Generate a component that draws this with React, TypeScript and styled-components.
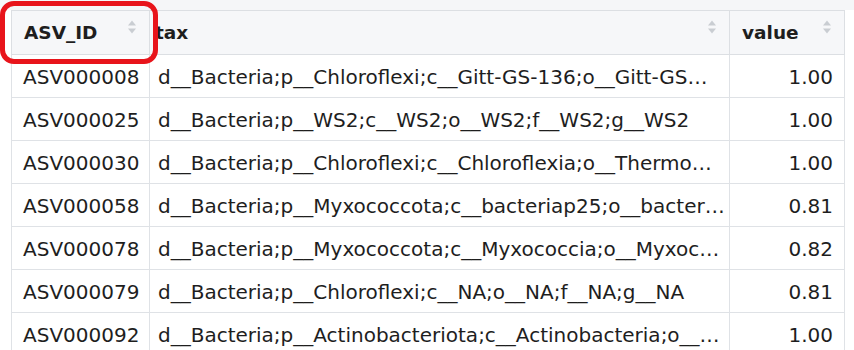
import React from "react";
import styled, { createGlobalStyle } from "styled-components";

const GlobalStyle = createGlobalStyle`
  html, body {
    margin: 0;
    padding: 0;
    background: #ffffff;
    overflow: hidden;
  }
  body {
    font-family: "DejaVu Sans", "Liberation Sans", sans-serif;
    color: #1e1e1e;
  }
`;

type Row = { id: string; tax: string; value: string };

const rows: Row[] = [
  { id: "ASV000008", tax: "d__Bacteria;p__Chloroflexi;c__Gitt-GS-136;o__Gitt-GS…", value: "1.00" },
  { id: "ASV000025", tax: "d__Bacteria;p__WS2;c__WS2;o__WS2;f__WS2;g__WS2", value: "1.00" },
  { id: "ASV000030", tax: "d__Bacteria;p__Chloroflexi;c__Chloroflexia;o__Thermo…", value: "1.00" },
  { id: "ASV000058", tax: "d__Bacteria;p__Myxococcota;c__bacteriap25;o__bacter…", value: "0.81" },
  { id: "ASV000078", tax: "d__Bacteria;p__Myxococcota;c__Myxococcia;o__Myxoc…", value: "0.82" },
  { id: "ASV000079", tax: "d__Bacteria;p__Chloroflexi;c__NA;o__NA;f__NA;g__NA", value: "0.81" },
  { id: "ASV000092", tax: "d__Bacteria;p__Actinobacteriota;c__Actinobacteria;o__…", value: "1.00" },
];

const Page = styled.div`
  position: relative;
  height: 350px;
  overflow: hidden;
  background: #ffffff;
`;

const TopBand = styled.div`
  height: 10px;
  background: #f5f6f8;
`;

const TableWrap = styled.div`
  padding: 0 9px 0 11px;
`;

const Table = styled.table`
  width: 100%;
  border-collapse: collapse;
  table-layout: fixed;
`;

const HeadCell = styled.th<{ $inset?: number }>`
  position: relative;
  height: 44px;
  padding: 0 24px 0 ${(p) => p.$inset ?? 12}px;
  background: #f6f7f9;
  border: 1px solid #dcdfe3;
  text-align: left;
  font-size: 18.5px;
  font-weight: 700;
  color: #1e1e1e;
  vertical-align: middle;
  white-space: nowrap;
  overflow: hidden;
  box-sizing: border-box;
`;

const Cell = styled.td<{ $align?: "left" | "right"; $inset?: number }>`
  height: 43px;
  padding: 1px 11px 0 ${(p) => p.$inset ?? 11}px;
  border: 1px solid #dfe2e6;
  text-align: ${(p) => p.$align ?? "left"};
  font-size: 20px;
  color: #1e1e1e;
  white-space: nowrap;
  overflow: hidden;
  vertical-align: middle;
  box-sizing: border-box;
`;

const SortIcon = styled.svg`
  position: absolute;
  top: 8px;
  right: 12px;
  width: 10px;
  height: 16px;
`;

const Highlight = styled.div`
  position: absolute;
  left: 0;
  top: 1px;
  width: 158px;
  height: 63px;
  border: 5px solid #e8141b;
  border-radius: 14px;
  box-sizing: border-box;
  pointer-events: none;
`;

const Sorter = () => (
  <SortIcon viewBox="0 0 10 16">
    <polygon points="1,6.5 5,1.5 9,6.5" fill="#c9cdd2" />
    <polygon points="1,9.5 5,14.5 9,9.5" fill="#c9cdd2" />
  </SortIcon>
);

export default function App() {
  return (
    <Page>
      <GlobalStyle />
      <TopBand />
      <TableWrap>
        <Table>
          <colgroup>
            <col style={{ width: 138 }} />
            <col />
            <col style={{ width: 115 }} />
          </colgroup>
          <thead>
            <tr>
              <HeadCell>
                ASV_ID
                <Sorter />
              </HeadCell>
              <HeadCell $inset={5}>
                tax
                <Sorter />
              </HeadCell>
              <HeadCell>
                value
                <Sorter />
              </HeadCell>
            </tr>
          </thead>
          <tbody>
            {rows.map((r) => (
              <tr key={r.id}>
                <Cell>{r.id}</Cell>
                <Cell $inset={8}>{r.tax}</Cell>
                <Cell $align="right">{r.value}</Cell>
              </tr>
            ))}
          </tbody>
        </Table>
      </TableWrap>
      <Highlight />
    </Page>
  );
}
